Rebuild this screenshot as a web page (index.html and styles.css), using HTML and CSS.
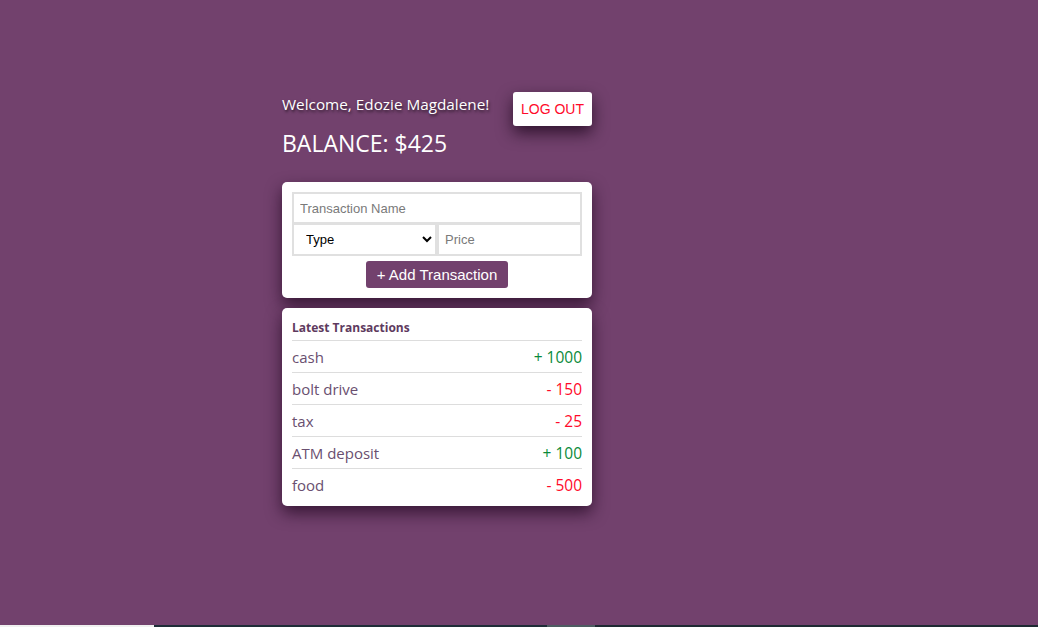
FILE: index.html
```html
<!DOCTYPE html>
<html>
<head>
<meta charset="utf-8">
<link rel="stylesheet" href="styles.css">
</head>
<body>
<div class="page">
  <main class="wrap">
    <div class="app">
      <header class="top">
        <div class="greet">
          <p class="welcome">Welcome, Edozie Magdalene!</p>
          <h1 class="balance">BALANCE: $425</h1>
        </div>
        <button class="logout">LOG OUT</button>
      </header>
      <form class="card form">
        <input class="field name" type="text" placeholder="Transaction Name">
        <div class="row2">
          <select class="field type">
            <option>Type</option>
          </select>
          <input class="field price" type="text" placeholder="Price">
        </div>
        <button type="button" class="add">+ Add Transaction</button>
      </form>
      <section class="card list">
        <h2 class="list-title">Latest Transactions</h2>
        <div class="tx"><span class="tx-name">cash</span><span class="amt plus">+ 1000</span></div>
        <div class="tx"><span class="tx-name">bolt drive</span><span class="amt minus">- 150</span></div>
        <div class="tx"><span class="tx-name">tax</span><span class="amt minus">- 25</span></div>
        <div class="tx"><span class="tx-name">ATM deposit</span><span class="amt plus">+ 100</span></div>
        <div class="tx"><span class="tx-name">food</span><span class="amt minus">- 500</span></div>
      </section>
    </div>
  </main>
  <div class="taskbar">
    <span class="tb-a"></span><span class="tb-b"></span><span class="tb-c"></span><span class="tb-d"></span>
  </div>
</div>
</body>
</html>
```
FILE: styles.css
```css
* { box-sizing: border-box; }
html, body { margin: 0; padding: 0; }
body {
  background: #72416d;
  font-family: "Open Sans", "Noto Sans", sans-serif;
}
.page {
  height: 627px;
  display: flex;
  flex-direction: column;
}
.wrap {
  flex: 1;
  padding-top: 92px;
  padding-left: 282px;
}
.app {
  width: 310px;
  display: flex;
  flex-direction: column;
}
.top {
  display: flex;
  justify-content: space-between;
  align-items: flex-start;
}
.welcome {
  margin: 0;
  padding-top: 1px;
  color: #fff;
  font-size: 15.3px;
  line-height: 22px;
  text-shadow: 1px 2px 3px rgba(0,0,0,0.6);
}
.balance {
  margin: 13px 0 0;
  color: #fff;
  font-weight: 400;
  font-size: 23px;
  line-height: 30px;
}
.logout {
  width: 79px;
  height: 34px;
  background: #fff;
  border: none;
  border-radius: 3px;
  color: #ff0a2a;
  font-family: "Liberation Sans", Arial, sans-serif;
  font-size: 14px;
  padding: 0;
  box-shadow: 0 7px 16px rgba(20,0,20,0.7);
}
.card {
  background: #fff;
  border-radius: 5px;
  box-shadow: 0 7px 16px rgba(30,5,30,0.7);
  padding: 10px;
}
.form {
  margin: 24px 0 0;
  display: flex;
  flex-direction: column;
  align-items: center;
}
.field {
  height: 32px;
  border: 2px solid #e0e0e0;
  border-radius: 0;
  font-family: "Liberation Sans", Arial, sans-serif;
  font-size: 13px;
  color: #222;
  background: #fff;
  padding: 0 6px;
  outline: none;
}
.field::placeholder { color: #7a7a7a; }
.name { width: 100%; }
.row2 {
  width: 100%;
  display: flex;
  margin-top: -1px;
}
.row2 .field { height: 33px; }
.type {
  width: 145px;
  color: #000;
  padding: 0 8px;
}
.price {
  flex: 1;
  min-width: 0;
}
.add {
  margin-top: 5px;
  height: 27px;
  padding: 0 11px;
  background: #72416d;
  color: #fff;
  border: none;
  border-radius: 3px;
  font-family: "Liberation Sans", Arial, sans-serif;
  font-size: 15px;
}
.list {
  margin-top: 10px;
  padding-top: 11px;
  padding-bottom: 5px;
}
.list-title {
  margin: 0;
  font-size: 12px;
  font-weight: 700;
  line-height: 18px;
  color: #5e3a5e;
  padding-bottom: 3px;
  border-bottom: 1px solid #ddd;
}
.tx {
  display: flex;
  justify-content: space-between;
  align-items: center;
  height: 32px;
  border-bottom: 1px solid #ddd;
  font-size: 15px;
}
.tx:last-child { border-bottom: none; }
.tx-name { color: #6a4f70; }
.amt { font-size: 15.5px; }
.amt.plus { color: #0a8a3a; }
.amt.minus { color: #ff0a2a; }
.taskbar {
  height: 2px;
  display: flex;
}
.tb-a { width: 154px; background: #f0f0f0; }
.tb-b { width: 393px; background: #1f2d38; }
.tb-c { width: 48px; background: #4e5c62; }
.tb-d { flex: 1; background: #1f2a33; }
```
